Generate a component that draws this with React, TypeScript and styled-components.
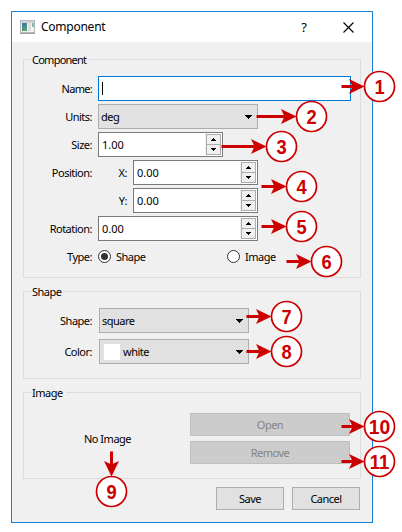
import React from 'react';
import styled, { createGlobalStyle } from 'styled-components';

const RED = '#cc0000';

const GlobalStyle = createGlobalStyle`
  * { box-sizing: border-box; }
  body {
    margin: 0;
    background: #fff;
    color: #000;
    font-family: "Noto Sans", "Open Sans", sans-serif;
    font-size: 11px;
    line-height: 15px;
  }
`;

const Page = styled.div`
  position: relative;
  width: 402px;
  height: 532px;
  overflow: hidden;
  padding: 11px 0 0 11px;
`;

const Dialog = styled.div`
  display: flex;
  flex-direction: column;
  width: 362px;
  height: 512px;
  border: 1px solid #1883d7;
  background: #f0f0f0;
`;

const TitleBar = styled.header`
  display: flex;
  align-items: center;
  height: 30px;
  flex: none;
  padding: 0 18px 0 8px;
  background: #fff;
`;

const Title = styled.h1`
  flex: 1;
  margin: 0 0 0 6px;
  font-size: 12px;
  font-weight: 400;
  line-height: 16px;
  letter-spacing: -0.25px;
`;

const Help = styled.span`
  width: 10px;
  margin-right: 34px;
  font-size: 13px;
  text-align: center;
`;

const Body = styled.main`
  display: flex;
  flex-direction: column;
  padding: 17px 11px 0;
`;

const Group = styled.section<{ $height: number }>`
  display: flex;
  flex-direction: column;
  height: ${(p) => p.$height}px;
  margin-bottom: 13px;
  border: 1px solid #dcdcdc;
`;

const Legend = styled.h2<{ $track?: number }>`
  align-self: flex-start;
  flex: none;
  height: 16px;
  margin: -8px 0 0 7px;
  padding: 0 3px 0 1px;
  background: #f0f0f0;
  font-size: 11px;
  font-weight: 400;
  line-height: 16px;
  letter-spacing: ${(p) => p.$track ?? -0.5}px;
`;

const Rows = styled.div<{ $top: number; $gap: number }>`
  display: flex;
  flex-direction: column;
  gap: ${(p) => p.$gap}px;
  padding-top: ${(p) => p.$top}px;
`;

const Row = styled.div`
  display: flex;
  align-items: center;
  height: 25px;
`;

const Label = styled.label<{ $gap?: number; $track?: number }>`
  width: 68px;
  flex: none;
  margin-right: ${(p) => p.$gap ?? 6}px;
  text-align: right;
  white-space: nowrap;
  letter-spacing: ${(p) => p.$track ?? -0.5}px;
`;

const AxisLabel = styled(Label)`
  width: 29px;
`;

const Text = styled.span<{ $track?: number }>`
  white-space: nowrap;
  letter-spacing: ${(p) => p.$track ?? -0.5}px;
`;

const NameInput = styled.div`
  display: flex;
  align-items: center;
  width: 253px;
  height: 25px;
  padding-left: 3px;
  border: 1px solid #0078d7;
  background: #fff;
`;

const Caret = styled.span`
  width: 1px;
  height: 13px;
  background: #000;
`;

const Combo = styled.div<{ $width: number }>`
  display: flex;
  align-items: center;
  gap: 3px;
  width: ${(p) => p.$width}px;
  height: 25px;
  padding: 0 5px 0 2px;
  border: 1px solid #adadad;
  background: #e1e1e1;

  svg { margin-left: auto; }
`;

const Swatch = styled.span`
  width: 16px;
  height: 16px;
  margin-left: 2px;
  background: #fff;
`;

const SpinBox = styled.div<{ $width: number }>`
  display: flex;
  align-items: center;
  justify-content: space-between;
  width: ${(p) => p.$width}px;
  height: 25px;
  padding: 0 1px 0 3px;
  border: 1px solid #7a7a7a;
  background: #fff;
`;

const Steps = styled.div`
  display: flex;
  flex-direction: column;
  width: 16px;
  height: 21px;
  padding: 0 0 0 1px;
  background: #f0f0f0;
`;

const Step = styled.span`
  display: flex;
  align-items: center;
  justify-content: center;
  height: 11px;
  border: 1px solid #adadad;
  background: #f0f0f0;

  & + & { margin-top: -1px; }
`;

const Radio = styled.span`
  display: flex;
  align-items: center;
  justify-content: center;
  width: 13px;
  height: 13px;
  margin-right: 5px;
  border: 1px solid #333;
  border-radius: 50%;
  background: #fff;
`;

const Dot = styled.span`
  width: 7px;
  height: 7px;
  border-radius: 50%;
  background: #333;
`;

const Option = styled.div<{ $width?: number }>`
  display: flex;
  align-items: center;
  width: ${(p) => (p.$width ? `${p.$width}px` : 'auto')};
`;

const ImagePane = styled.div`
  display: flex;
  justify-content: space-between;
  padding: 12px 10px 0 60px;
`;

const NoImage = styled(Text)`
  margin-top: 18px;
`;

const ButtonStack = styled.div`
  display: flex;
  flex-direction: column;
  gap: 5px;
`;

const Button = styled.button<{ $width: number }>`
  width: ${(p) => p.$width}px;
  height: 23px;
  padding: 0;
  border: 1px solid #adadad;
  background: #e1e1e1;
  color: #000;
  font: inherit;
  letter-spacing: -0.5px;

  &:disabled {
    border-color: #bfbfbf;
    background: #ccc;
    color: #838383;
  }
`;

const Footer = styled.footer`
  display: flex;
  justify-content: flex-end;
  gap: 8px;
  margin-top: -5px;
  padding-right: 1px;
`;

const Overlay = styled.svg`
  position: absolute;
  inset: 0;
  pointer-events: none;

  text {
    font: bold 20px "Liberation Sans", Arial, sans-serif;
    fill: ${RED};
    text-anchor: middle;
  }
`;

const WindowIcon = () => (
  <svg width="15" height="14" viewBox="0 0 15 14">
    <defs>
      <linearGradient id="pane" x1="0" y1="0" x2="0.4" y2="1">
        <stop offset="0" stopColor="#4773a5" />
        <stop offset="0.55" stopColor="#3f8c8c" />
        <stop offset="1" stopColor="#58a968" />
      </linearGradient>
    </defs>
    <path d="M0 0h15v14H0z" fill="#b4b8bc" />
    <path d="M1 1h13v2H1z" fill="#cfd3d6" />
    <path d="M1 3h13v9H1z" fill="#f1f2f2" />
    <path d="M2 3h5v8H2z" fill="url(#pane)" />
    <path d="M8 3h3v8H8z" fill="#dedede" />
    <path d="M12 3h2v4h-2z" fill="#86b9ae" />
    <path d="M0 13h15v1H0z" fill="#9da2a7" />
  </svg>
);

const CloseIcon = () => (
  <svg width="11" height="11" viewBox="0 0 11 11">
    <path d="M.5.5l10 10M10.5.5l-10 10" stroke="#000" strokeWidth="1.1" />
  </svg>
);

const DropArrow = () => (
  <svg width="7" height="4" viewBox="0 0 7 4" shapeRendering="crispEdges">
    <path d="M0 0h7v1H0zM1 1h5v1H1zM2 2h3v1H2zM3 3h1v1H3z" />
  </svg>
);

const StepArrow = ({ down = false }: { down?: boolean }) => (
  <svg width="5" height="3" viewBox="0 0 5 3" shapeRendering="crispEdges">
    <path d={down ? 'M0 0h5v1H0zM1 1h3v1H1zM2 2h1v1H2z' : 'M2 0h1v1H2zM1 1h3v1H1zM0 2h5v1H0z'} />
  </svg>
);

const Spin = ({ value, width }: { value: string; width: number }) => (
  <SpinBox $width={width}>
    <Text $track={0}>{value}</Text>
    <Steps>
      <Step><StepArrow /></Step>
      <Step><StepArrow down /></Step>
    </Steps>
  </SpinBox>
);

type Mark = { n: number; x: number; y: number; length: number; down?: boolean };

const MARKS: Mark[] = [
  { n: 1, x: 379.5, y: 86.5, length: 38 },
  { n: 2, x: 311.5, y: 116.5, length: 55 },
  { n: 3, x: 281.5, y: 146.5, length: 60 },
  { n: 4, x: 301.5, y: 186.5, length: 40 },
  { n: 5, x: 301.5, y: 226.5, length: 40 },
  { n: 6, x: 326.5, y: 261.5, length: 40 },
  { n: 7, x: 286.5, y: 316.5, length: 40 },
  { n: 8, x: 286.5, y: 351.5, length: 40 },
  { n: 9, x: 111.5, y: 491.5, length: 40, down: true },
  { n: 10, x: 379.5, y: 426.5, length: 38 },
  { n: 11, x: 379.5, y: 461.5, length: 38 },
];

const Callout = ({ n, x, y, length, down }: Mark) => (
  <g transform={`translate(${x} ${y})`}>
    <g transform={down ? 'rotate(90)' : undefined}>
      <path d={`M${-length} 0H-24`} stroke={RED} strokeWidth="3" />
      <path d="M-15 0L-30.5 -7.5L-27 0L-30.5 7.5Z" fill={RED} />
    </g>
    <circle r="15" fill="#fff" stroke={RED} strokeWidth="1.7" />
    <text y="7.3" textLength={n < 10 ? 10.2 : n === 11 ? 19.5 : 21.5} lengthAdjust="spacingAndGlyphs">{n}</text>
  </g>
);

export default function App() {
  return (
    <Page>
      <GlobalStyle />
      <Dialog>
        <TitleBar>
          <WindowIcon />
          <Title>Component</Title>
          <Help>?</Help>
          <CloseIcon />
        </TitleBar>
        <Body>
          <Group $height={219}>
            <Legend $track={-0.75}>Component</Legend>
            <Rows $top={8} $gap={3}>
              <Row>
                <Label $track={-0.7}>Name:</Label>
                <NameInput><Caret /></NameInput>
              </Row>
              <Row>
                <Label>Units:</Label>
                <Combo $width={160}><Text>deg</Text><DropArrow /></Combo>
              </Row>
              <Row>
                <Label>Size:</Label>
                <Spin value="1.00" width={125} />
              </Row>
              <Row>
                <Label>Position:</Label>
                <AxisLabel>X:</AxisLabel>
                <Spin value="0.00" width={125} />
              </Row>
              <Row>
                <Label />
                <AxisLabel>Y:</AxisLabel>
                <Spin value="0.00" width={125} />
              </Row>
              <Row>
                <Label>Rotation:</Label>
                <Spin value="0.00" width={160} />
              </Row>
              <Row>
                <Label>Type:</Label>
                <Option $width={129}><Radio><Dot /></Radio><Text>Shape</Text></Option>
                <Option><Radio /><Text>Image</Text></Option>
              </Row>
            </Rows>
          </Group>

          <Group $height={88}>
            <Legend>Shape</Legend>
            <Rows $top={8} $gap={6}>
              <Row>
                <Label $gap={7}>Shape:</Label>
                <Combo $width={150}><Text>square</Text><DropArrow /></Combo>
              </Row>
              <Row>
                <Label $gap={7}>Color:</Label>
                <Combo $width={150}><Swatch /><Text>white</Text><DropArrow /></Combo>
              </Row>
            </Rows>
          </Group>

          <Group $height={87}>
            <Legend>Image</Legend>
            <ImagePane>
              <NoImage>No Image</NoImage>
              <ButtonStack>
                <Button $width={160} disabled>Open</Button>
                <Button $width={160} disabled>Remove</Button>
              </ButtonStack>
            </ImagePane>
          </Group>

          <Footer>
            <Button $width={68}>Save</Button>
            <Button $width={68}>Cancel</Button>
          </Footer>
        </Body>
      </Dialog>
      <Overlay width="402" height="532" viewBox="0 0 402 532">
        {MARKS.map((mark) => <Callout key={mark.n} {...mark} />)}
      </Overlay>
    </Page>
  );
}
